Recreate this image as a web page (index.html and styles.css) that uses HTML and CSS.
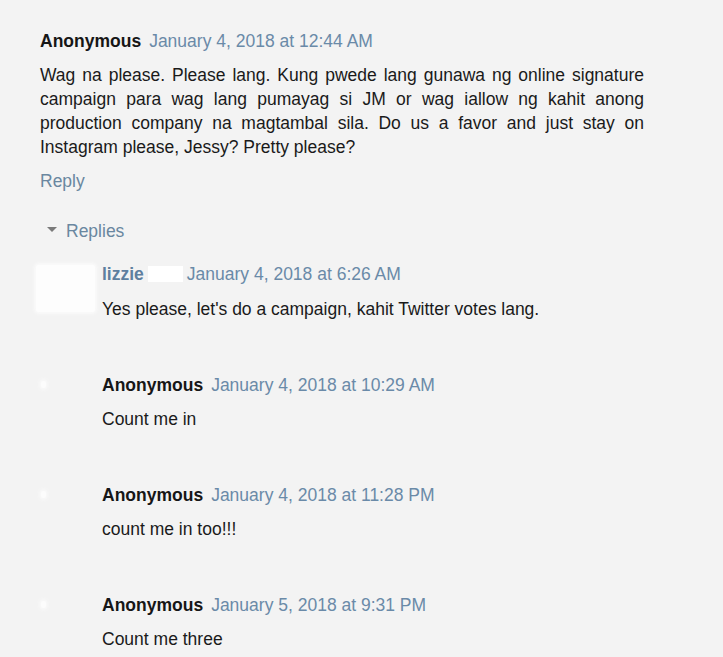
FILE: index.html
```html
<!DOCTYPE html>
<html>
<head>
<meta charset="utf-8">
<link rel="stylesheet" href="styles.css">
</head>
<body>
<div class="comment">
  <div class="head"><span class="name">Anonymous</span><span class="date">January 4, 2018 at 12:44 AM</span></div>
  <p class="body justify">Wag na please. Please lang. Kung pwede lang gunawa ng online signature campaign para wag lang pumayag si JM or wag iallow ng kahit anong production company na magtambal sila. Do us a favor and just stay on Instagram please, Jessy? Pretty please?</p>
  <div class="reply-link">Reply</div>
  <div class="replies-toggle"><span class="caret"></span><span>Replies</span></div>
  <div class="thread">
    <div class="item">
      <div class="avatar"><span class="blur-box"></span></div>
      <div class="content">
        <div class="head"><span class="name link">lizzie</span><span class="redact"></span><span class="date">January 4, 2018 at 6:26 AM</span></div>
        <p class="body first-body">Yes please, let's do a campaign, kahit Twitter votes lang.</p>
      </div>
    </div>
    <div class="item">
      <div class="avatar"><span class="dot"></span></div>
      <div class="content">
        <div class="head"><span class="name">Anonymous</span><span class="date">January 4, 2018 at 10:29 AM</span></div>
        <p class="body">Count me in</p>
      </div>
    </div>
    <div class="item">
      <div class="avatar"><span class="dot"></span></div>
      <div class="content">
        <div class="head"><span class="name">Anonymous</span><span class="date">January 4, 2018 at 11:28 PM</span></div>
        <p class="body">count me in too!!!</p>
      </div>
    </div>
    <div class="item">
      <div class="avatar"><span class="dot"></span></div>
      <div class="content">
        <div class="head"><span class="name">Anonymous</span><span class="date">January 5, 2018 at 9:31 PM</span></div>
        <p class="body">Count me three</p>
      </div>
    </div>
  </div>
</div>
</body>
</html>
```

FILE: styles.css
```css
html, body {
  margin: 0;
  padding: 0;
  background: #f3f3f3;
}
body {
  font-family: "Liberation Sans", Arial, sans-serif;
  font-size: 17.5px;
  line-height: 24px;
  color: #1a1a1a;
  height: 657px;
  overflow: hidden;
}
.comment {
  padding: 29px 79px 0 40px;
}
.head {
  display: flex;
  align-items: baseline;
  white-space: nowrap;
  height: 24px;
}
.name {
  font-weight: bold;
  color: #161616;
  margin-right: 8px;
}
.name.link {
  color: #5e7f9f;
  margin-right: 4px;
}
.redact {
  display: inline-block;
  width: 35px;
  height: 16px;
  background: #ffffff;
  margin-right: 4px;
  align-self: center;
}
.date {
  color: #6a8aa8;
}
.body {
  margin: 10px 0 0 0;
}
.first-body {
  margin-top: 11px;
}
.justify {
  text-align: justify;
}
.reply-link {
  margin-top: 10px;
  color: #6a87a0;
}
.replies-toggle {
  margin-top: 26px;
  display: flex;
  align-items: center;
  color: #6a87a0;
}
.caret {
  width: 0;
  height: 0;
  border-left: 5px solid transparent;
  border-right: 5px solid transparent;
  border-top: 5px solid #7a7a7a;
  margin-left: 7px;
  margin-right: 9px;
  margin-top: -3px;
}
.thread {
  margin-top: 19px;
}
.item {
  display: flex;
  margin-left: -4px;
  margin-bottom: 52px;
}
.item:last-child {
  margin-bottom: 0;
}
.avatar {
  width: 66px;
  flex: none;
}
.blur-box {
  display: block;
  width: 59px;
  height: 47px;
  margin-top: 3px;
  background: #fdfdfd;
  border-radius: 3px;
  box-shadow: 0 0 3px 2px #fafafa;
}
.dot {
  display: block;
  width: 5px;
  height: 7px;
  margin-top: 8px;
  margin-left: 5px;
  background: #fcfcfc;
  border-radius: 2px;
  box-shadow: 0 0 3px 2px #f8f8f8;
}
.content {
  flex: 1;
}
```
